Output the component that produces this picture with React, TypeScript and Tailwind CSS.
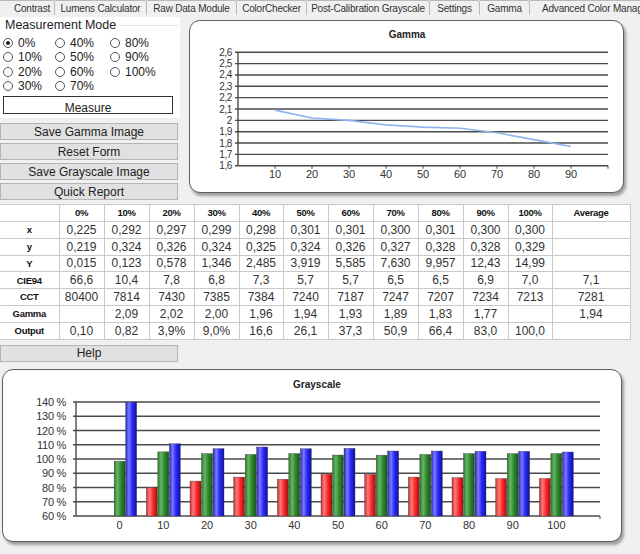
import React from 'react'

const tabs = [
  { label: 'Contrast', w: 'w-[55px] pl-[10px]' },
  { label: 'Lumens Calculator', w: 'w-[92px]' },
  { label: 'Raw Data Module', w: 'w-[90px]' },
  { label: 'ColorChecker', w: 'w-[70px]' },
  { label: 'Post-Calibration Grayscale', w: 'w-[123px]' },
  { label: 'Settings', w: 'w-[50px]' },
  { label: 'Gamma', w: 'w-[50px]' },
  { label: 'Advanced Color Management', w: 'w-[140px] justify-start pl-[12px]' },
]

const radios = [
  ['0%', '40%', '80%'],
  ['10%', '50%', '90%'],
  ['20%', '60%', '100%'],
  ['30%', '70%', ''],
]

const headers = ['', '0%', '10%', '20%', '30%', '40%', '50%', '60%', '70%', '80%', '90%', '100%', 'Average']
const colWidths = [59, 45, 45, 45, 45, 44, 45, 45, 45, 45, 45, 44, 78]

const rows: string[][] = [
  ['x', '0,225', '0,292', '0,297', '0,299', '0,298', '0,301', '0,301', '0,300', '0,301', '0,300', '0,300', ''],
  ['y', '0,219', '0,324', '0,326', '0,324', '0,325', '0,324', '0,326', '0,327', '0,328', '0,328', '0,329', ''],
  ['Y', '0,015', '0,123', '0,578', '1,346', '2,485', '3,919', '5,585', '7,630', '9,957', '12,43', '14,99', ''],
  ['CIE94', '66,6', '10,4', '7,8', '6,8', '7,3', '5,7', '5,7', '6,5', '6,5', '6,9', '7,0', '7,1'],
  ['CCT', '80400', '7814', '7430', '7385', '7384', '7240', '7187', '7247', '7207', '7234', '7213', '7281'],
  ['Gamma', '', '2,09', '2,02', '2,00', '1,96', '1,94', '1,93', '1,89', '1,83', '1,77', '', '1,94'],
  ['Output', '0,10', '0,82', '3,9%', '9,0%', '16,6', '26,1', '37,3', '50,9', '66,4', '83,0', '100,0', ''],
]

const gamma = [2.09, 2.02, 2.0, 1.96, 1.94, 1.93, 1.89, 1.83, 1.77]

// [red, green, blue] in %
const gray: [number | null, number, number][] = [
  [null, 98.5, 140],
  [80, 105, 110.7],
  [84.5, 103.8, 107.3],
  [87.3, 103.2, 108.4],
  [85.8, 103.8, 107.2],
  [89.3, 102.8, 107.5],
  [89.2, 102.7, 105.6],
  [87.3, 103.2, 105.6],
  [86.9, 103.8, 105.4],
  [86.3, 103.8, 105.4],
  [86.3, 103.8, 104.9],
]

function Radio({ label, checked }: { label: string; checked?: boolean }) {
  if (!label) return <div />
  return (
    <div className="flex items-center gap-[5px] h-[14.3px]">
      <span className="w-[10px] h-[10px] rounded-full border border-[#555] bg-white flex items-center justify-center">
        {checked && <span className="w-[4px] h-[4px] rounded-full bg-[#222]" />}
      </span>
      <span className="text-[12px] text-[#222] leading-none">{label}</span>
    </div>
  )
}

function GrayButton({ label }: { label: string }) {
  return (
    <button className="w-[178px] h-[17px] bg-[#e1e1e1] border border-[#b4b4b4] text-[12px] text-[#222] leading-none flex items-center justify-center">
      {label}
    </button>
  )
}

function GammaChart() {
  const x0 = 48
  const x1 = 418
  const yTop = 31.3
  const yBot = 144.7
  const sx = (v: number) => x0 + v * 3.7
  const sy = (g: number) => yBot - (g - 1.6) * ((yBot - yTop) / 1.0)
  const ticks = [1.6, 1.7, 1.8, 1.9, 2.0, 2.1, 2.2, 2.3, 2.4, 2.5, 2.6]
  const pts = gamma.map((g, i) => `${sx((i + 1) * 10)},${sy(g)}`).join(' ')
  return (
    <svg width="433" height="171" className="block">
      <text x="217" y="17" textAnchor="middle" fontSize="10" fontWeight="bold" fill="#222">
        Gamma
      </text>
      {ticks.map((t) => (
        <g key={t}>
          <line x1={x0 - 3} x2={x1} y1={sy(t)} y2={sy(t)} stroke="#4a4a4a" strokeWidth="1.4" />
          <text x="42" y={sy(t) + 3.5} textAnchor="end" fontSize="10" fill="#333" letterSpacing="-0.4">
            {t === 2 ? '2' : t.toFixed(1).replace('.', ',')}
          </text>
        </g>
      ))}
      <line x1={x0} x2={x0} y1={yTop} y2={yBot} stroke="#4a4a4a" strokeWidth="1.4" />
      {[10, 20, 30, 40, 50, 60, 70, 80, 90, 100].map((v) => (
        <line key={v} x1={sx(v)} x2={sx(v)} y1={yBot} y2={yBot + 3} stroke="#4a4a4a" strokeWidth="1" />
      ))}
      {[10, 20, 30, 40, 50, 60, 70, 80, 90].map((v) => (
        <text key={v} x={sx(v)} y="157" textAnchor="middle" fontSize="11" fill="#333">
          {v}
        </text>
      ))}
      <polyline points={pts} fill="none" stroke="#8fb4ec" strokeWidth="1.6" />
    </svg>
  )
}

function GrayscaleChart() {
  const x0 = 73
  const x1 = 597
  const yTop = 32
  const yBot = 146
  const step = (x1 - x0) / 12
  const sy = (p: number) => yBot - (p - 60) * ((yBot - yTop) / 80)
  const ticks = [60, 70, 80, 90, 100, 110, 120, 130, 140]
  const bar = (cx: number, v: number | null, fill: string) =>
    v === null ? null : (
      <rect x={cx} y={sy(v)} width="11" height={yBot - sy(v)} fill={fill} stroke="#444" strokeWidth="0.4" />
    )
  return (
    <svg width="618" height="171" className="block">
      <defs>
        <linearGradient id="gr" x1="0" x2="1" y1="0" y2="0">
          <stop offset="0" stopColor="#c83030" />
          <stop offset="0.3" stopColor="#ff7a7a" />
          <stop offset="0.6" stopColor="#ff2a2a" />
          <stop offset="1" stopColor="#9a1010" />
        </linearGradient>
        <linearGradient id="gg" x1="0" x2="1" y1="0" y2="0">
          <stop offset="0" stopColor="#2a7a2a" />
          <stop offset="0.3" stopColor="#68b468" />
          <stop offset="0.6" stopColor="#2f8a2f" />
          <stop offset="1" stopColor="#175517" />
        </linearGradient>
        <linearGradient id="gb" x1="0" x2="1" y1="0" y2="0">
          <stop offset="0" stopColor="#2828b8" />
          <stop offset="0.3" stopColor="#7a7aff" />
          <stop offset="0.6" stopColor="#2a2aff" />
          <stop offset="1" stopColor="#10109a" />
        </linearGradient>
      </defs>
      <text x="314" y="18" textAnchor="middle" fontSize="10" fontWeight="bold" fill="#222">
        Grayscale
      </text>
      {ticks.map((t) => (
        <g key={t}>
          <line x1={x0 - 3} x2={x1} y1={sy(t)} y2={sy(t)} stroke="#4a4a4a" strokeWidth="1.4" />
          <text x="63" y={sy(t) + 4} textAnchor="end" fontSize="11" fill="#333" letterSpacing="-0.3">
            {t} %
          </text>
        </g>
      ))}
      <line x1={x0} x2={x0} y1={yTop} y2={yBot} stroke="#4a4a4a" strokeWidth="1.4" />
      <line x1={x1} x2={x1} y1={yBot} y2={yBot + 3} stroke="#4a4a4a" strokeWidth="1" />
      {gray.map((g, i) => {
        const c = x0 + step * (i + 1)
        return (
          <g key={i}>
            {bar(c - 17, g[0], 'url(#gr)')}
            {bar(c - 5.5, g[1], 'url(#gg)')}
            {bar(c + 6, g[2], 'url(#gb)')}
            <text x={c} y="159" textAnchor="middle" fontSize="11" fill="#333">
              {i * 10}
            </text>
          </g>
        )
      })}
    </svg>
  )
}

export default function App() {
  return (
    <div
      className="w-[640px] h-[554px] overflow-hidden bg-[#f0f0f0] text-[#222]"
      style={{ fontFamily: '"Liberation Sans", Arial, sans-serif' }}
    >
      {/* tab strip */}
      <div className="flex h-[15px] items-end">
        {tabs.map((t) => (
          <div
            key={t.label}
            className={`${t.w} shrink-0 h-[15px] flex items-center justify-center border-t border-r border-[#b9b9b9] bg-[#f0f0f0] rounded-tr-[3px] text-[10px] text-[#333] tracking-[-0.2px] whitespace-nowrap overflow-hidden`}
          >
            {t.label}
          </div>
        ))}
      </div>

      <div className="flex mt-[2px]">
        <div className="w-[180px] shrink-0 flex flex-col">
          {/* measurement mode group */}
          <div className="h-[101px] bg-white relative pl-[3px] pt-[2px]">
            <div className="flex items-center">
              <span className="text-[12.5px] text-[#222] pl-[2px] pr-[3px] leading-[13px]">Measurement Mode</span>
              <span className="flex-1 h-px bg-[#e2e2e2] mr-[2px]" />
            </div>
            <div className="grid grid-cols-[52px_55px_60px] mt-[4px]">
              {radios.map((r, i) => (
                <React.Fragment key={i}>
                  {r.map((l, j) => (
                    <Radio key={j} label={l} checked={i === 0 && j === 0} />
                  ))}
                </React.Fragment>
              ))}
            </div>
            <div className="mt-[3px] w-[170px] h-[18px] border border-[#333] bg-white flex items-end justify-center overflow-hidden">
              <span className="text-[12px] leading-[14px] text-[#222] translate-y-[2px]">Measure</span>
            </div>
          </div>
          <div className="flex flex-col gap-[3px] mt-[5px]">
            <GrayButton label="Save Gamma Image" />
            <GrayButton label="Reset Form" />
            <GrayButton label="Save Grayscale Image" />
            <GrayButton label="Quick Report" />
          </div>
        </div>

        <div className="ml-[9px] mt-[3px] w-[435px] h-[173px] border border-[#5f5f5f] rounded-[11px] bg-white shadow-[2px_3px_3px_rgba(0,0,0,0.35)] overflow-hidden">
          <GammaChart />
        </div>
      </div>

      {/* data table */}
      <table className="mt-[4px] table-fixed border-collapse w-[630px] bg-white">
        <colgroup>
          {colWidths.map((w, i) => (
            <col key={i} style={{ width: w }} />
          ))}
        </colgroup>
        <thead>
          <tr className="h-[17px]">
            {headers.map((h, i) => (
              <th
                key={i}
                className={`border border-[#c9c9c9] p-0 text-[9.5px] font-bold text-[#111] tracking-[-0.3px] ${i === 0 ? 'border-l-0' : ''}`}
              >
                {h}
              </th>
            ))}
          </tr>
        </thead>
        <tbody>
          {rows.map((r, ri) => (
            <tr key={ri} className="h-[16.8px]">
              {r.map((c, ci) => (
                <td
                  key={ci}
                  className={`border border-[#c9c9c9] p-0 text-center leading-none ${
                    ci === 0
                      ? 'border-l-0 text-[9.5px] font-bold text-[#111] tracking-[-0.3px]'
                      : 'text-[12px] text-[#333]'
                  }`}
                >
                  {c}
                </td>
              ))}
            </tr>
          ))}
        </tbody>
      </table>

      <div className="mt-[5px]">
        <GrayButton label="Help" />
      </div>

      <div className="mt-[7px] ml-[2px] w-[620px] h-[173px] border border-[#5f5f5f] rounded-[11px] bg-white shadow-[2px_3px_3px_rgba(0,0,0,0.35)] overflow-hidden">
        <GrayscaleChart />
      </div>
    </div>
  )
}
